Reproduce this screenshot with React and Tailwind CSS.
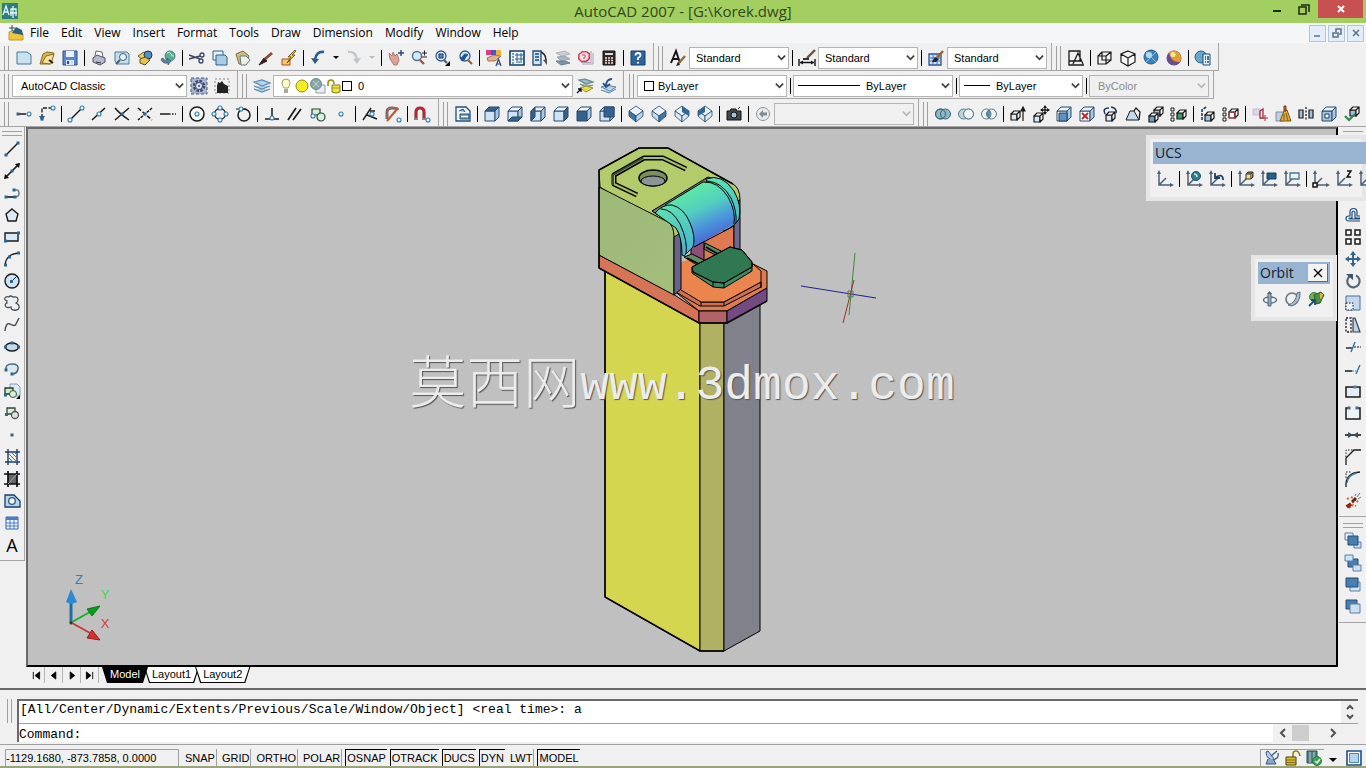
import { useState } from "react";
import clsx from "clsx";

const NAVY = "#1d3f63";
const INK = "#1a1a1a";

// solid-editing / view cube, face decides which side is filled dark
const Cube = ({ face, light = "#cfe3f5", dark = "#35618f" }) => (
    <g strokeWidth="1" stroke="#2b4a6b" strokeLinejoin="round">
        <path d="M1 5h10v10H1z" fill={face === "front" ? dark : light} />
        <path d="M1 5l4-4h10l-4 4z" fill={face === "top" ? dark : "#eaf3fb"} />
        <path d="M11 5l4-4v10l-4 4z" fill={face === "right" ? dark : "#a7c6e2"} />
        {face === "bottom" && <path d="M1 15l4-4h10l-4 4z" fill={dark} />}
        {face === "left" && <path d="M1 5l4-4v10l-4 4z" fill={dark} />}
        {face === "back" && <path d="M5 1h10v10H5z" fill={dark} />}
    </g>
);

const SmallBox = ({ x = 0, y = 0, fill = "#dbe8f4" }) => (
    <g transform={`translate(${x} ${y})`} stroke={INK} strokeWidth="1.2" strokeLinejoin="round">
        <path d="M0 3h6v6H0z" fill={fill} />
        <path d="M0 3l3-3h6L6 3zM6 3l3-3v6L6 9z" fill="#fff" />
    </g>
);

const Iso = ({ a, b, c }) => (
    <g stroke="#2a4868" strokeWidth=".8" strokeLinejoin="round">
        <path d="M8 0l7 5-7 5-7-5z" fill={a} />
        <path d="M1 5l7 5v6l-7-6z" fill={b} />
        <path d="M15 5l-7 5v6l7-6z" fill={c} />
    </g>
);

const Axes = ({ children }) => (
    <>
        <path d="M2 2v12h12M2 14l7-7" stroke="#4b6075" strokeWidth="1.5" />
        <path d="M2 -1L0 3h4zM17 14l-4-2v4z" fill="#4b6075" stroke="none" />
        {children}
    </>
);

const Dot = ({ x, y, fill = "#2f6690" }) => <rect x={x - 1.5} y={y - 1.5} width="3" height="3" fill={fill} stroke="none" />;
const Ring = ({ x, y }) => <circle cx={x} cy={y} r="2" fill="#eaf6ff" stroke="#3a7ca8" strokeWidth="1.1" />;

const icons = {
    new: <path d="M1 2h10l4 3v9H1z" fill="#c9e2ef" stroke="#47799c" />,
    open: <><path d="M1 14L4 4l4-2 7 1-4 11z" fill="#d9b84e" stroke="#8a6a20" /><path d="M3 13l4-7 8-2-3 10z" fill="#f6e3a0" stroke="#8a6a20" /><path d="M10 10l4 3" stroke="#222" strokeWidth="2" /></>,
    save: <><path d="M1 1h14v14H1z" fill="#5c86c4" stroke="#2c4f8c" /><path d="M4 1h8v6H4z" fill="#e8f1fb" stroke="none" /><path d="M4 10h8v5H4z" fill="#d5e2f2" stroke="none" /><path d="M6 11v3" stroke="#2c4f8c" strokeWidth="2" /></>,
    print: <><path d="M4 6l1-5 6 1 1 5" fill="#fff" stroke="#667" /><path d="M2 8l4-3 8 3v4l-5 3-7-3z" fill="#b5b9cf" stroke="#4c4f68" /><path d="M5 12l5 1" stroke="#333" /></>,
    preview: <><path d="M1 2h12l2 2v10H3l-2-3z" fill="#c4dfec" stroke="#4c7c99" /><circle cx="9" cy="7" r="3.5" fill="#e9f7ff" stroke="#38617e" /><path d="M6 10l-4 4" stroke="#4b5a66" strokeWidth="2" /></>,
    publish: <><path d="M1 6l6-4 5 3-6 5z" fill="#edd36a" stroke="#6d5b1c" /><circle cx="11" cy="5" r="4" fill="#4e93c4" stroke="#235" /><path d="M3 9l5-2 5 3-5 5-5-2z" fill="#e4c450" stroke="#5c4a12" /></>,
    globe: <><circle cx="10" cy="6" r="5" fill="#5bb08b" stroke="#3e80a0" /><path d="M7 3q3-2 4 1t3 2" stroke="#d2efe2" /><path d="M1 9q1 5 7 4v2l3-4-4-3v2q-3 1-4-2z" fill="#5b7fa3" stroke="#34536f" strokeWidth=".6" /></>,
    cut: <><path d="M0 5l11 4M0 9l11-3" stroke="#3b4760" strokeWidth="1.4" /><circle cx="13" cy="5" r="2" stroke="#35466d" strokeWidth="1.3" /><circle cx="12" cy="11" r="2" stroke="#35466d" strokeWidth="1.3" /></>,
    copy: <><path d="M1 1h10v9H1z" fill="#e9f3f9" stroke="#2d6289" /><path d="M4 5h9l2 2v8H4z" fill="#a9cde4" stroke="#2d6289" /></>,
    paste: <><path d="M1 4l7-3 6 5-3 8H4z" fill="#c9bd82" stroke="#7a6d38" /><path d="M5 6h6l4 4-4 5H6z" fill="#eef0ee" stroke="#677" /></>,
    match: <><path d="M1 15l5-7 3 3z" fill="#2d2220" stroke="#2d2220" /><path d="M7 9l7-6" stroke="#8a4a2c" strokeWidth="2.8" /></>,
    blockEdit: <><path d="M1 9h8v6H1z" fill="#f6c873" stroke="#a6541c" /><path d="M14 0L7 7h3l-4 6 8-8h-3l4-4z" fill="#f3ce28" stroke="#57430c" strokeWidth=".8" /></>,
    undo: <><path d="M14 2Q6 1 5 10" stroke="#2a5c8a" strokeWidth="2.6" /><path d="M1 8l4 6 4-5z" fill="#2a5c8a" stroke="none" /></>,
    redo: <><path d="M2 2q8-1 9 8" stroke="#c2c6c9" strokeWidth="2.4" /><path d="M7 9l4 5 4-6z" fill="#c2c6c9" stroke="none" /></>,
    pan: <><path d="M1 3l3 3 1-4 2 4 2-2 2 6-2 5H6L2 9z" fill="#dba498" stroke="#a2685d" strokeWidth=".8" /><path d="M13 0v6M10 3h6" stroke="#27486c" strokeWidth="1.4" /></>,
    zoomRt: <><circle cx="6" cy="6" r="4.5" fill="#d3eafa" stroke="#4f7390" strokeWidth="1.4" /><path d="M9 10l4 4" stroke="#a4583a" strokeWidth="2.4" /><path d="M11 3h5M13.500 .5v5M11 7h5" stroke="#222" /></>,
    zoomWin: <><circle cx="7" cy="6" r="5" fill="#cfe8fa" stroke="#355f88" strokeWidth="1.3" /><path d="M5 4h4v4H5z" fill="#5a8bb8" stroke="#235" /><path d="M10 10l3 3" stroke="#456" strokeWidth="2" /><path d="M16 11v5h-5z" fill="#000" stroke="none" /></>,
    zoomPrev: <><circle cx="8" cy="6" r="5" fill="#cfe8fa" stroke="#355f88" strokeWidth="1.3" /><path d="M11 5Q7 2 5 8l-2-1 2 4 3-2" fill="#27538a" stroke="#27538a" /><path d="M11 10l4 4" stroke="#a4583a" strokeWidth="2.2" /></>,
    props: <><path d="M0 0h5v5H0z" fill="#d83a8b" stroke="none" /><path d="M5 0h5v5H5z" fill="#4a52c8" stroke="none" /><path d="M10 0h5v5h-5z" fill="#e9b23c" stroke="none" /><path d="M1 8l7-3 7 1-6 5H2z" fill="#e0b28c" stroke="#94603d" strokeWidth=".8" /><path d="M10 16l2.500-7 2.500 7M11 14h3" stroke="#2a4a7c" strokeWidth="1.200" /></>,
    dcenter: <><path d="M1 1h14v14H1z" fill="#eaf4fb" stroke="#123d66" strokeWidth="1.6" /><path d="M4 3v11" stroke="#123d66" strokeDasharray="2 1" /><path d="M7 4h2v2H7zM11 4h2v2h-2zM7 8h2v2H7zM11 8h2v2h-2zM7 12h6" stroke="#2e618f" /></>,
    palettes: <><path d="M1 1h8v14H1z" fill="#cfe3f0" stroke="#1d4c79" strokeWidth="1.3" /><path d="M3 4h4M3 7h4M3 10h4" stroke="#1d4c79" strokeWidth="1.5" /><path d="M9 2q5 2 5 9" stroke="#222" strokeWidth="1.4" /><path d="M11 10l4 5v-6z" fill="#555" /></>,
    sheets: <><path d="M1 3l9-2 5 3-8 2z" fill="#c6d0d8" stroke="#a9b4bc" /><path d="M2 7l8-1 5 3-9 2z" fill="#aab7c1" stroke="#9aa7b1" /><path d="M1 11l9 0 5 2-9 2z" fill="#7d93a4" stroke="#6a7f90" /></>,
    markup: <><path d="M4 14h11V3M3 12.500h10V1" fill="none" stroke="#a6a0b6" /><path d="M1 1h11v11H1z" fill="#fbe3e5" stroke="none" /><path d="M3 3q1-2 3-1 3-1 4 1 2 0 1 3 1 3-1 4-2 2-4 1-3 1-4-1-2-1-1-3-1-3 2-4z" stroke="#c9223f" strokeWidth="1.3" /><path d="M4 5h3v3H5" stroke="#d04a60" /></>,
    calc: <><path d="M2 1h12v14H2z" fill="#35282a" stroke="#1c1213" /><path d="M4 3h8v2H4z" fill="#cfe3d4" stroke="none" /><path d="M4 8h8M4 10.500h8M4 13h8" stroke="#f3e5d5" strokeWidth="1.6" strokeDasharray="2 1" /></>,
    textStyle: <><path d="M1 13L6 1l4 12M3 9h6" stroke="#111" strokeWidth="1.9" /><path d="M8 14l7-8" stroke="#8e6a45" strokeWidth="2.4" /><path d="M6 16l4-1-2-3z" fill="#222" /></>,
    dimStyle: <><path d="M0 9v7M16 9v7M1 12.500h14" stroke="#111" strokeWidth="1.400" /><path d="M1 12.500l3-2v4zM15 12.500l-3-2v4z" fill="#111" /><path d="M8 8l8-8" stroke="#6b4f3c" strokeWidth="2.400" /><path d="M4 9h6" stroke="#333" strokeWidth="2" /></>,
    tableStyle: <><path d="M1 4h12v11H1z" fill="#cddff3" stroke="#2c5590" strokeWidth="1.3" /><path d="M1 8h12M1 11h12M5 4v11M9 4v11" stroke="#4c77b5" /><path d="M4 12l3-5 4 2-3 3z" fill="#1c2733" stroke="none" /><path d="M9 8l6-7" stroke="#9a6132" strokeWidth="2.4" /></>,
    gear: <><path d="M0 0h16v16H0z" fill="#a9b4cb" stroke="#485a7e" strokeDasharray="3 2" /><circle cx="8" cy="8" r="5" stroke="#36486d" strokeWidth="2.4" strokeDasharray="2.500 1.400" /><circle cx="8" cy="8" r="3.500" fill="#dfe4f0" stroke="#36486d" /><circle cx="8" cy="8" r="1" fill="#36486d" stroke="none" /></>,
    workspace: <><path d="M1 1h14v14H1z" stroke="#888" strokeDasharray="2 2" /><path d="M3 15V8l1-4 2 1 2-2 2 3 4 2v7z" fill="#222" stroke="none" /></>,
    layers: <><path d="M0 4l8-2 8 3-8 3zM0 8l8 3 8-3M0 11l8 3 8-3" fill="#b6d2e6" stroke="#5b8cb0" strokeWidth="1.2" /></>,
    layerMake: <><path d="M2 2l6-1 8 3-7 2zM3 6l6 3 7-2" fill="#9fb9c0" stroke="#5e858e" strokeWidth="1.2" /><path d="M3 10l6-2 7 2-7 4z" fill="#e8d94a" stroke="#9c8f2a" /><path d="M0 15l4-4M4 14v-3H1" stroke="#111" strokeWidth="1.3" /></>,
    layerPrev: <><path d="M1 9l6-2 9 2-6 4zM1 12l8 3 7-4" fill="#b8cfe2" stroke="#5f88aa" /><path d="M12 1Q6 1 6 8M3 5l3 4 4-3" stroke="#27538a" strokeWidth="1.8" /></>,
    bulb: <><path d="M8 1q4 0 4 4 0 2-2 5H6Q4 7 4 5q0-4 4-4z" fill="#fdfbcf" stroke="#a4a05a" /><path d="M6 12h4M6 14h4" stroke="#8b8b8b" strokeWidth="1.500" /></>,
    sun: <circle cx="8" cy="8" r="6" fill="#f2ee23" stroke="#8c8a1a" />,
    vp: <><path d="M6 7h9v8H6z" fill="#e8eef4" stroke="#8aa0b4" /><circle cx="6" cy="6" r="5.500" fill="#8ca6a8" stroke="#6b8694" /><path d="M3 3l6 6M9 3L3 9" stroke="#bfd0d0" /></>,
    lock: <><path d="M2 8V5q0-3 3-3t3 4" stroke="#9a9312" strokeWidth="1.6" /><path d="M6 7h8v7q-4 2-8 0z" fill="#eee645" stroke="#827b10" /><path d="M6 10h8" stroke="#a69e20" /></>,
    help: <><path d="M1 1h14v14H1z" fill="#2d649c" stroke="#173c66" /><path d="M5.500 5.500q0-2.500 2.500-2.500t2.500 2.200Q10.500 7 8 8v2" stroke="#fff" strokeWidth="1.800" /><path d="M7 12h2v1.500H7z" fill="#fff" stroke="none" /></>,
    trackPt: <><path d="M1 8h9" stroke={INK} strokeWidth="1.500" /><Dot x={2} y={8} /><Ring x={13} y={8} /></>,
    from: <><path d="M3 12V2h9" stroke={INK} strokeWidth="1.300" strokeDasharray="4 1.500" /><Dot x={3} y={13} /><path d="M0 10l3 5 3-5z" fill="#2f5f88" stroke="none" /><Ring x={14} y={2} /></>,
    endpt: <><path d="M3 13L13 3" stroke={INK} strokeWidth="1.500" /><Ring x={14} y={2} /><Ring x={2} y={14} /></>,
    midpt: <><path d="M1 14L14 2" stroke={INK} strokeWidth="1.500" /><Ring x={8} y={8} /></>,
    inter: <><path d="M1 2q5 6 14 12M15 2L1 14" stroke={INK} strokeWidth="1.500" /><Dot x={8} y={8} /></>,
    appInt: <><path d="M15 2L1 14" stroke={INK} strokeWidth="1.500" strokeDasharray="3 1" /><path d="M1 2l14 12" stroke={INK} strokeWidth="1.500" strokeDasharray="4 2" /><Dot x={8} y={8} /></>,
    ext: <><path d="M0 8h9" stroke={INK} strokeWidth="1.500" /><path d="M9 8h7" stroke={INK} strokeDasharray="1.500 1.500" strokeWidth="1.500" /></>,
    center: <><circle cx="8" cy="8" r="7" stroke={INK} strokeWidth="1.500" fill="#f7fbfe" /><Ring x={8} y={8} /></>,
    quad: <><circle cx="8" cy="8" r="5.500" stroke={INK} strokeWidth="1.300" /><Ring x={8} y={2} /><Ring x={14} y={8} /><Ring x={8} y={14} /><Ring x={2} y={8} /></>,
    tan: <><circle cx="9" cy="9" r="6" stroke={INK} strokeWidth="1.500" /><path d="M1 3h10" stroke={INK} /><Ring x={6} y={3} /></>,
    perp: <><path d="M1 13h14M8 2v11" stroke={INK} strokeWidth="1.500" /><Ring x={8} y={12} /></>,
    par: <path d="M1 14L9 2M6 14l8-11" stroke={INK} strokeWidth="1.700" />,
    insertPt: <><path d="M2 3h8v6H2z" fill="#d8ecd5" stroke="#25452d" strokeWidth="1.200" /><circle cx="11" cy="11" r="4" fill="#dcefe0" stroke="#25452d" strokeWidth="1.200" /><Ring x={3} y={10} /></>,
    node: <Ring x={8} y={8} />,
    nearest: <><path d="M1 14L9 2M5 9l10 4M8 5h5" stroke={INK} strokeWidth="1.400" /><Ring x={10} y={8} /></>,
    noneSnap: <><path d="M2 13V6q0-4 5-4t6 2" stroke="#8b6761" strokeWidth="3" /><path d="M2 15L13 2" stroke="#b9593c" strokeWidth="2" /><Ring x={14} y={14} /></>,
    magnet: <><path d="M2 14V6q0-4 4-4t4 4v8" stroke="#a82e3c" strokeWidth="3.200" /><path d="M.5 13h3M8.500 13h3" stroke="#888" strokeWidth="2" /><Ring x={14} y={14} /></>,
    namedViews: <><path d="M1 1h10l4 4v10H1z" fill="#eef5fb" stroke="#234f77" strokeWidth="1.300" /><path d="M4 5l4-2 2 3M5 13V8h9v5H5z" fill="#7fa7c9" stroke="#234f77" /><path d="M6 10.500h7" stroke="#fff" /></>,
    top: <Cube face="top" />, bottom: <Cube face="bottom" />, left: <Cube face="left" />,
    right: <Cube face="right" />, front: <Cube face="front" />, back: <Cube face="back" />,
    sw: <Iso a="#e8f2fa" b="#3f75a5" c="#b9d4ea" />, se: <Iso a="#e8f2fa" b="#c4dbee" c="#3f75a5" />,
    ne: <><Iso a="#e8f2fa" b="#dbe9f4" c="#dbe9f4" /><path d="M8 0l7 5v5L8 6z" fill="#346592" stroke="none" /></>,
    nw: <><Iso a="#e8f2fa" b="#dbe9f4" c="#dbe9f4" /><path d="M8 0L1 5v5l7-4z" fill="#346592" stroke="none" /></>,
    camera: <><path d="M1 5h3l1-2h5l1 2h4v9H1z" fill="#43484f" stroke="#111" /><circle cx="8" cy="9" r="3" fill="#a7c4d8" stroke="#111" /><path d="M12 3l2-2" stroke="#222" /></>,
    prevView: <><circle cx="8" cy="8" r="6.500" fill="#e9ecee" stroke="#8a949c" /><path d="M4 8l4-4v2.500h4v3H8V12z" fill="#7e8b96" stroke="none" /></>,
    union: <g stroke="#376274"><circle cx="5.500" cy="8" r="5" fill="#8fb7c6" /><circle cx="10.500" cy="8" r="5" fill="#8fb7c6" /><circle cx="5.500" cy="8" r="5" /></g>,
    subtract: <g stroke="#547989"><circle cx="10.500" cy="8" r="5" fill="#f2f7f9" /><circle cx="5.500" cy="8" r="5" fill="#bcd3dc" /><circle cx="10.500" cy="8" r="5" fill="#eef5f8" /></g>,
    intersect: <g stroke="#547989"><circle cx="5.500" cy="8" r="5" fill="#eef5f8" /><circle cx="10.500" cy="8" r="5" fill="#eef5f8" /><path d="M8 4q4 4 0 8-4-4 0-8z" fill="#5b93ab" /></g>,
    extrude: <><SmallBox x={1} y={5} /><path d="M13 15V3M11 5l2-4 2 4z" stroke={INK} fill={INK} strokeWidth="1.200" /></>,
    moveFace: <><SmallBox x={1} y={7} /><path d="M12 0v8M8 4h8" stroke={INK} strokeWidth="1.300" /><path d="M12-1l-2 3h4zM12 9l-2-3h4zM7 4l3-2v4zM17 4l-3-2v4z" fill={INK} stroke="none" /></>,
    offsetFace: <><Cube light="#fff" /><path d="M3 7h8v8H3z" fill="#5f93c4" stroke={NAVY} /></>,
    deleteFace: <><Cube light="#fff" /><path d="M3 7l6 6M9 7l-6 6" stroke="#b8222e" strokeWidth="1.800" /></>,
    rotateFace: <><SmallBox x={4} y={6} /><path d="M3 8Q0 2 7 2M9 1q6 1 5 6" stroke={NAVY} strokeWidth="1.600" /></>,
    taper: <><path d="M1 14L5 5h4l5 9z" fill="#c7d9ea" stroke={INK} /><path d="M9 5l2-3 4 4-1 8" stroke={INK} strokeWidth="1.300" /></>,
    copyFace: <><SmallBox x={6} y={1} fill="#9fc1de" /><SmallBox x={1} y={7} fill="#6f9cc6" /></>,
    colorFace: <><SmallBox x={6} y={4} fill="#3f9a62" /><path d="M0 2h3v3H0zM0 7h3v3H0zM0 12h3v3H0z" fill="#fff" stroke={INK} /></>,
    copyEdge: <><SmallBox x={5} y={6} fill="#a7c3df" /><path d="M2 14V4l4-3" stroke={NAVY} strokeWidth="1.600" strokeDasharray="3 1" /></>,
    colorEdge: <><SmallBox x={6} y={3} fill="#fff" /><path d="M6 6h6v6H6z" stroke="#c03a52" /><path d="M0 2h3v3H0zM0 7h3v3H0zM0 12h3v3H0z" fill="#fff" stroke={INK} /></>,
    imprint: <><path d="M1 3h7v6H1z" fill="#ddd6e8" stroke="#c7bcd6" /><path d="M8 5l3-2v9H8z" stroke="#a5283e" strokeWidth="1.300" /><path d="M13 9v6M10 12h6" stroke="#b02b40" /></>,
    clean: <><path d="M1 6h8v9H1z" fill="#bcd0df" stroke="#7d92a4" /><path d="M9 5l3-1 4 11H5z" fill="#dfab3e" stroke="#7a5314" /><path d="M9 0h2v5H9z" fill="#bf643c" stroke="#7a3a1c" /><path d="M9 8l0 6M11 7l2 8" stroke="#805e18" /></>,
    separate: <><path d="M1 4h4v8H1zM11 4h4v8h-4z" fill="#a4c0d8" stroke={INK} strokeWidth="1.200" /><path d="M8 1v14" stroke={INK} strokeDasharray="2 1.500" strokeWidth="1.300" /></>,
    shell: <><Cube light="#a7c3dc" /><path d="M4 8h4v4H4z" fill="#edf5fb" stroke={NAVY} /></>,
    check: <><SmallBox x={6} y={1} fill="#9fc1de" /><path d="M1 10l4 4 6-6" stroke="#2c8a4d" strokeWidth="2.200" /></>,
    wire2d: <path d="M1 1h11v10H1zM5 14l5-11 5 11M7 11h6M1 11v4h15" stroke={INK} strokeWidth="1.300" />,
    wire3d: <path d="M1 6h8v8H1zM5 2h9v8H5zM1 6l4-4M9 6l5-4M9 14l5-4" stroke={INK} strokeWidth="1.200" />,
    hidden3d: <path d="M8 1l7 3v8l-7 4-7-4V4zM1 4l7 4 7-4M8 8v8" fill="#fff" stroke={INK} strokeWidth="1.200" />,
    realistic: <><circle cx="8" cy="7" r="7" fill="#3d82ba" stroke="#275c88" /><circle cx="6" cy="5" r="3" fill="#b7dcf2" stroke="none" /><path d="M3 2l10 10M13 2L3 12" stroke="#a7cce6" strokeWidth=".8" /></>,
    conceptual: <><circle cx="8" cy="8" r="7.500" fill="#6a4c92" stroke="none" /><path d="M3 2q6-4 11 2 2 4 0 8Q4 12 3 2z" fill="#e3a032" stroke="none" /><circle cx="7" cy="4.500" r="2.500" fill="#fbe7a5" stroke="none" /></>,
    vsManager: <><circle cx="6" cy="7" r="6" fill="#67a7c9" stroke="#2c6187" /><path d="M8 4h7v11H8z" fill="#e4f1fa" stroke="#1d4c79" /><path d="M10 7h1M12 7h2M10 9h1M12 9h2M10 12h1M12 12h2" stroke="#1d4c79" strokeWidth="1.300" /></>,
    line: <><path d="M2 14L14 2" stroke={INK} strokeWidth="1.400" /><Dot x={2} y={14} /><Dot x={14} y={2} /></>,
    xline: <><path d="M1 15L15 1" stroke={INK} strokeWidth="1.700" /><path d="M0 16l1-5 4 4zM16 0l-1 5-4-4z" fill="#111" stroke="none" /><Dot x={8} y={8} /></>,
    pline: <><path d="M1 12h10q4 0 4-4t-5-3" stroke="#6c8190" strokeWidth="1.600" /><path d="M1 12h9" stroke={INK} strokeWidth="1.400" /><Dot x={2} y={12} /><Dot x={11} y={12} /><Dot x={10} y={5} /></>,
    polygon: <path d="M8 2l6 5-2 7H4L2 7z" fill="#dfe8ee" stroke={INK} strokeWidth="1.400" />,
    rect: <><path d="M1 4h13v8H1z" fill="#d9e8f7" stroke={INK} strokeWidth="1.400" /><Dot x={1.5} y={12} /><Dot x={14.5} y={4} /></>,
    arc: <><path d="M1 14Q2 3 15 2" stroke={INK} strokeWidth="1.300" /><Dot x={1.500} y={14} /><Dot x={5.500} y={6} /><Dot x={14.500} y={2} /></>,
    circle: <><circle cx="8" cy="8" r="7" fill="#cfe3f5" stroke={INK} strokeWidth="1.400" /><path d="M8 8l5-5" stroke="#235" /><Dot x={7.500} y={8.500} /></>,
    revcloud: <path d="M3 6Q0 5 1 3q1-2 4-1 1-2 4 0 5-1 5 3 0 2-2 3 4 2 3 5-1 3-5 2-3 0-3-3-3 1-5 0-2-3 1-4-1-1 0-2z" fill="#edf0f2" stroke="#4a4f54" strokeWidth="1.300" />,
    spline: <path d="M1 14Q2 5 6 7q5 3 6 0l3-6" stroke="#444b52" strokeWidth="1.400" />,
    ellipse: <><ellipse cx="8" cy="8" rx="6.500" ry="4" fill="#c6dbea" stroke={INK} strokeWidth="1.400" /><Dot x={1.500} y={8} /><Dot x={14.500} y={8} /><Dot x={8} y={4} /></>,
    ellArc: <><path d="M2 9q-1-6 6-6t6 5-6 5" stroke="#486a83" strokeWidth="1.600" fill="#dce8f0" /><Dot x={2} y={9} /><Dot x={8} y={13} /></>,
    insertBlk: <><path d="M6 1h7l3 3v9H6z" fill="#dce9f2" stroke="#86a0b4" /><path d="M1 5h8v6H1z" fill="#d4ead0" stroke="#1d3d22" strokeWidth="1.300" /><circle cx="9" cy="11" r="3.500" fill="#dcefd6" stroke="#2d5a30" /><Dot x={1.500} y={12} /><path d="M16 12v4h-4z" fill="#000" stroke="none" /></>,
    makeBlk: <><path d="M3 3h8v6H3z" fill="#dceadc" stroke="#2e4a30" strokeWidth="1.300" /><circle cx="11" cy="10" r="3.500" fill="#dde3dd" stroke="#555" strokeWidth="1.300" /><Dot x={2.500} y={9.500} /></>,
    point: <Dot x={8} y={8} />,
    hatch: <><path d="M1 3h15M1 13h15M4 0v16M13 0v16" stroke="#1a3e5e" strokeWidth="1.400" /><path d="M4 4l9 9M4 8l5 5M8 4l5 5M4 11l2 2M11 4l2 2" stroke="#3d7aa6" /></>,
    gradient: <><path d="M4 3h9v10H4z" fill="#63686b" stroke="none" /><path d="M0 3h16M0 13h16M4 0v16M13 0v16" stroke="#0d0d12" strokeWidth="1.700" /><path d="M4 13l9-10" stroke="#a6a6a6" /></>,
    region: <><path d="M1 2h9l6 6v6H1z" fill="#bcd4ee" stroke="#173f66" strokeWidth="1.300" /><circle cx="8" cy="8" r="3.300" fill="#f2f7fb" stroke="#2a5b87" strokeWidth="1.300" /></>,
    table: <><path d="M2 2h12v12H2z" fill="#f2f7ff" stroke="#3562a5" /><path d="M2 3.500h12" stroke="#4d7cc0" strokeWidth="3" /><path d="M2 8h12M2 11h12M6 5v9M10 5v9" stroke="#4d7cc0" /></>,
    erase: <path d="M2 12L9 3l5 3-6 8z" fill="#f0cfc3" stroke="#6f4a41" />,
    offset: <path d="M15 14H4q-3 0-3-2.500T4 9h1V5q0-3.500 3.500-3.500T12 5v4h3M15 12H5q-1 0-1-.5t1-.5h2V6q0-2 1.500-2T10 6v5h5" stroke="#1f4c77" strokeWidth="1.200" fill="none" />,
    array: <path d="M1 1h5v5H1zM10 1h5v5h-5zM1 10h5v5H1zM10 10h5v5h-5z" fill="#fff" stroke={INK} strokeWidth="1.500" />,
    move: <><path d="M8 1v14M1 8h14" stroke="#36648b" strokeWidth="2" /><path d="M8 0L5 4h6zM8 16l-3-4h6zM0 8l4-3v6zM16 8l-4-3v6z" fill="#36648b" stroke="none" /></>,
    rotate: <><path d="M5 3a6.200 6.200 0 1 0 6-.5" stroke="#51687a" strokeWidth="2.200" /><path d="M1 1h7v6z" fill="#36536b" stroke="none" /></>,
    scale: <><path d="M1 1h14v14H1z" fill="#c3d8ee" stroke="#4a6f92" /><path d="M1 8h7v7H1z" fill="#eaf3fb" stroke={INK} strokeDasharray="1.500 1.500" /></>,
    stretch: <><path d="M1 1h5v14H1z" stroke={INK} strokeDasharray="2 1.500" strokeWidth="1.300" /><path d="M8 1h2l5 14H8z" fill="#c3d2de" stroke="#2c4258" strokeWidth="1.200" /></>,
    trim: <><path d="M1 9h6" stroke={INK} strokeWidth="1.400" /><path d="M9 8h7" stroke={INK} strokeDasharray="2 1" /><path d="M6 13l4-10" stroke="#2b73a8" strokeWidth="1.400" /></>,
    extend: <><path d="M0 10h7" stroke={INK} strokeWidth="1.500" /><path d="M7 10h4" stroke="#2b73a8" strokeDasharray="2 1" /><path d="M11 13l4-9" stroke="#2b73a8" strokeWidth="1.400" /></>,
    breakPt: <><path d="M1 4h14v10H1z" fill="#e4edf5" stroke={INK} strokeWidth="1.500" /><Dot x={10} y={4} fill="#5d8097" /></>,
    breakTwo: <><path d="M3 3H1v11h14V3h-2" fill="#edf2f7" stroke={INK} strokeWidth="1.500" /><Dot x={4} y={3} fill="#51688a" /><Dot x={12} y={3} fill="#51688a" /></>,
    join: <><path d="M0 8h16" stroke={INK} strokeWidth="1.600" /><path d="M8 8L3 5v6zM8 8l5-3v6z" fill="#33505f" stroke="none" /></>,
    chamfer: <><path d="M1 16V9l8-8h7" stroke={INK} strokeWidth="1.300" /><path d="M1 8V1h7" stroke={INK} strokeDasharray="1.500 1.500" /></>,
    fillet: <><path d="M1 16Q0 2 15 1" stroke={INK} strokeWidth="1.300" /><path d="M2 12Q3 4 12 2" stroke="#4483b8" strokeWidth="1.500" /><path d="M1 7V1h6" stroke={INK} strokeDasharray="1.500 1.500" /></>,
    explode: <><path d="M2 6l2-1M1 13l5-2 5-4M4 15l4-3 3 1M6 4l4 2 3 3" stroke="#d06a35" strokeWidth="2" strokeDasharray="2 1.500" /><path d="M2 14l4-3" stroke="#8a2418" strokeWidth="3.500" /><path d="M7 9l4-4" stroke="#5a2a20" strokeWidth="3" /><path d="M12 4l3-4M13 6l3-2M10 3l1-2" stroke="#5b7c9c" /></>,
    drawFront: <><path d="M0 0h8v7H0z" fill="#e4eef8" stroke="#5b7fa5" /><path d="M9 9h7v6H9z" fill="#c4dbf0" stroke="#5b7fa5" /><path d="M3 3h10v9H3z" fill="#477fb3" stroke="#274c70" /></>,
    drawBack: <><path d="M3 4h10v8H3z" fill="#477fb3" stroke="#274c70" /><path d="M0 0h8v6H0z" fill="#cfe2f4" stroke="#5b7fa5" /><path d="M8 10h8v6H8z" fill="#cfe2f4" stroke="#5b7fa5" /></>,
    drawAbove: <><path d="M5 5h10v9H5z" fill="#d3e6f5" stroke="#5b7fa5" /><path d="M1 1h12v9H1z" fill="#477fb3" stroke="#274c70" /></>,
    drawUnder: <><path d="M1 1h11v9H1z" fill="#477fb3" stroke="#274c70" /><path d="M5 5h10v9H5z" fill="#cfe0ef" stroke="#5b7fa5" /></>,
    ucs: <Axes />,
    ucsWorld: <Axes><circle cx="10" cy="5" r="4.500" fill="#2f7c92" stroke="#1d4f66" /><path d="M8 3q3 0 3 3" stroke="#bfe6dd" strokeWidth="1.500" /></Axes>,
    ucsPrev: <Axes><path d="M14 9Q14 2 7 6M6 2v5h5" stroke={NAVY} strokeWidth="1.800" /></Axes>,
    ucsFace: <Axes><path d="M8 3h5v5H8z" fill="#f0dd7a" stroke="#333" /><path d="M8 3l2-2h5l-2 2M13 8l2-2V1" fill="#6f6742" stroke="#333" /></Axes>,
    ucsObject: <Axes><path d="M6 2h9v6H6z" fill="#275e8a" stroke="#173f60" /></Axes>,
    ucsView: <Axes><path d="M6 2h9v6H6z" fill="#e8f3f8" stroke="#4f7484" strokeWidth="1.300" /></Axes>,
    ucsOrigin: <Axes><path d="M0 12h4v4H0z" fill="#fff" stroke="#111" strokeWidth="1.500" /></Axes>,
    ucsZ: <Axes><path d="M11 0h4l-4 6h4" stroke="#111" strokeWidth="1.400" /></Axes>,
    orbit: <><ellipse cx="8" cy="9" rx="6.500" ry="3" stroke="#53677c" strokeWidth="1.400" /><path d="M6 2h3v13H6z" fill="#8fa9c0" stroke="#53677c" /><path d="M5 3l2.500-3L10 3z" fill="#53677c" /></>,
    freeOrbit: <><circle cx="7" cy="8" r="6" stroke="#6a7b8b" strokeWidth="1.700" /><path d="M3 14q8-2 9-12l3-1q1 10-8 14z" fill="#a9bac9" stroke="#5b7186" /></>,
    contOrbit: <><circle cx="6" cy="6" r="4.500" fill="#6fb15b" stroke="#437a3c" /><path d="M6 4l7-3 3 3-4 8-4 1z" fill="#4e8f42" stroke="#285c2b" /><path d="M1 15l6-6M3 9h4v5" stroke="#1c4f7c" strokeWidth="1.800" /><path d="M12 2l3 1-1 4-2 1z" fill="#ddb63c" stroke="none" /></>,
    comm: <><path d="M2 2q0 8 9 8L4 1z" fill="#b5cbe6" stroke="#385886" /><path d="M4 9l-2 5h10l-3-5" fill="#8ba6cc" stroke="#385886" /><path d="M7 6l6-5M11 9q4-1 3-6" stroke="#385886" strokeWidth="1.300" /></>,
    padlock: <><path d="M8 7V4q0-3 3-3t4 5" stroke="#8f8316" strokeWidth="1.600" /><path d="M1 7h10v8H1z" fill="#d8bd2b" stroke="#4c420c" /><path d="M1 10h10M1 12.500h10" stroke="#7b6c14" /></>,
    standards: <><path d="M1 1h10v12H1z" fill="#527f87" stroke="#2c4d55" /><path d="M4 2v11M8 2v11" stroke="#bcd2d6" /><circle cx="11" cy="11" r="4.500" fill="#3aa254" stroke="#287a3c" /><path d="M9 11l2 2 3-4" stroke="#fff" strokeWidth="1.400" /></>,
    cleanScreen: <><path d="M1 1h14v14H1z" fill="#fff" stroke="#1f4f80" strokeWidth="1.600" /><path d="M3.500 3.500h9v9h-9z" fill="#b4d3ef" stroke="#4d83b5" /></>,
};

const Icon = ({ name }) => (
    <svg viewBox="0 0 16 16" width="16" height="16" fill="none" className="shrink-0 overflow-visible">{icons[name]}</svg>
);

const Sep = () => (
    <span className="flex w-[6px] shrink-0 justify-center"><span className="h-4 w-px bg-black" /></span>
);

const Drop = ({ faded }) => (
    <button aria-label="history" className="flex w-[13px] shrink-0 items-center justify-center">
        <span className={clsx("border-x-[3px] border-t-[3px] border-x-transparent", faded ? "border-t-[#bdbdbd]" : "border-t-black")} />
    </button>
);

const Tools = ({ items }) => items.map((name, i) => {
    if (name === "|") return <Sep key={i} />;
    if (name === "v") return <Drop key={i} />;
    if (name === "v-") return <Drop key={i} faded />;
    return (
        <button key={i} aria-label={name} className="flex h-[22px] w-[23px] shrink-0 items-center justify-center hover:bg-[#d5e6f5]">
            <Icon name={name} />
        </button>
    );
});

const Grip = () => (
    <span className="mr-[3px] ml-1 flex h-6 shrink-0 gap-[3px]">
        <span className="w-px bg-[#a0a0a0]" />
        <span className="w-px bg-[#a0a0a0]" />
    </span>
);

const Bar = ({ children, className }) => (
    <div className={clsx("flex shrink-0 items-center border-r border-b border-[#a5a5a5] pt-[2px] pr-1", className)}>
        <Grip />
        {children}
    </div>
);

const Chevron = ({ className, d = "M1 3l4 4 4-4" }) => (
    <svg viewBox="0 0 10 10" width="10" height="10" fill="none" stroke="currentColor" strokeWidth="2" className={className}><path d={d} /></svg>
);

const Combo = ({ label, value, width, before, disabled, line, inset = "pl-[6px]" }) => (
    <div className={clsx("relative flex h-[22px] shrink-0 items-center border border-[#b4b4b4]", disabled ? "bg-[#f0f0f0]" : "bg-white", width)}>
        {before}
        {line && <span className="ml-1 flex-1 border-t border-black" />}
        <select
            aria-label={label}
            disabled={disabled}
            className={clsx("appearance-none bg-transparent pr-4 text-[11px] leading-[20px] outline-none", inset, line ? "w-[92px]" : "w-full", disabled ? "text-[#8a8a8a]" : "text-black")}
        >
            <option>{value}</option>
        </select>
        <Chevron className={clsx("pointer-events-none absolute right-[2px] size-[9px]", disabled ? "text-[#b8b8b8]" : "text-[#404040]")} />
    </div>
);

const Swatch = () => <span className="ml-[6px] size-[10px] shrink-0 border border-black bg-white" />;

const menus = ["File", "Edit", "View", "Insert", "Format", "Tools", "Draw", "Dimension", "Modify", "Window", "Help"];

const drawTools = ["line", "xline", "pline", "polygon", "rect", "arc", "circle", "revcloud", "spline", "ellipse", "ellArc", "insertBlk", "makeBlk", "point", "hatch", "gradient", "region", "table"];
const modifyTools = ["erase", "copy", "separate", "offset", "array", "move", "rotate", "scale", "stretch", "trim", "extend", "breakPt", "breakTwo", "join", "chamfer", "fillet", "explode"];
const orderTools = ["drawFront", "drawBack", "drawAbove", "drawUnder"];

const HGrip = () => (
    <span className="mt-1 mb-[2px] flex w-5 flex-col gap-[3px]">
        <span className="h-px bg-[#a0a0a0]" />
        <span className="h-px bg-[#a0a0a0]" />
    </span>
);

const Drawing = () => (
    <svg viewBox="28 129 1308 536" className="h-full w-full" fill="none" stroke="#000" strokeLinejoin="round">
        <defs>
            <linearGradient id="drum" gradientUnits="userSpaceOnUse" x1="692" y1="186" x2="716" y2="240">
                <stop offset="0" stopColor="#5feaa0" />
                <stop offset=".4" stopColor="#52cfc0" />
                <stop offset=".7" stopColor="#4c94dc" />
                <stop offset="1" stopColor="#4763cf" />
            </linearGradient>
            <linearGradient id="disc" x1="0" y1="0" x2="0.3" y2="1">
                <stop offset="0" stopColor="#5fe4b0" />
                <stop offset="1" stopColor="#48b9cf" />
            </linearGradient>
            <linearGradient id="shell" x1="0" y1="0" x2="1" y2="1">
                <stop offset="0" stopColor="#9db877" />
                <stop offset="1" stopColor="#a4be7c" />
            </linearGradient>
            <pattern id="ridge" width="4" height="2" patternUnits="userSpaceOnUse" patternTransform="rotate(-4)">
                <path d="M0 1h4" stroke="#0c3a24" strokeWidth=".9" />
            </pattern>
        </defs>

        {/* body */}
        <path d="M605 268l95 54v329l-95-54z" fill="#d5d64f" />
        <path d="M700 320h24v331h-24z" fill="#b0b162" />
        <path d="M724 323l36-21v329l-36 20z" fill="#81818b" />
        <path d="M605 270v327l95 54h24" strokeWidth="1.500" />

        {/* collar */}
        <path d="M599 255l74 39 26 17v12l-100-55z" fill="#d67457" />
        <path d="M673 290l67-30 13 4 14 7v17l-40 23h-28z" fill="#df7b50" />
        <path d="M699 311h28v12h-28z" fill="#b06368" />
        <path d="M727 311l40-23v13l-40 22z" fill="#744a83" />
        <path d="M681 284l20 18h23l37-20v5l-37 19h-24l-26-15z" fill="#cf6f52" />
        <path d="M681 262l50-15 22 17 8 7v11l-37 20h-23l-20-12z" fill="#ea854d" stroke="none" />
        <path d="M753 264l8 7v11l-37 20h-23l-20-12" />
        <path d="M761 282v6M724 302v4M701 302v4" />
        <path d="M599 255v13l100 55h28l40-22" strokeWidth="1.500" />

        {/* right arm and inner block */}
        <path d="M700 236l34-13v36l-34 8z" fill="#dd7a51" />
        <path d="M734 200h6v50l-6 4z" fill="#71688f" />
        <path d="M691 245l13-3v20l-13-4z" fill="#8d4f76" />
        <path d="M684 257l8-3 20 10-7 6zM705 243l18 9-4 5-15-8z" fill="#5c8c68" />
        <path d="M687 258l18 9M706 247l12 7" strokeWidth="1.500" />

        {/* top shell */}
        <path d="M599 170l40-22h29l65 36q7 4 7 16l-6 2q0-9-6-14l-16-10-60 33 19 11q8 5 8 16l-5-1-74-50z" fill="#b4cb6c" />
        <path d="M599 187l69 35q6 4 6 15v58l-75-40z" fill="url(#shell)" />
        <path d="M674 237l5-3 2 2v53l-7 6z" fill="#6a6389" />
        <path d="M599 187v-17l40-22h29l65 36M599 187v68" strokeWidth="1.500" />
        <path d="M652 211l56-34 8 3-58 35z" fill="#767d78" />

        {/* groove and hole */}
        <path d="M637 195l-23-11v-9l30-17h19l23 11" strokeWidth="5" />
        <path d="M637 195l-23-11v-9l30-17h19l23 11" stroke="#a9bd66" strokeWidth="2" />
        <path d="M613 185v-10l30-17" stroke="#3f4a38" strokeWidth="2" />
        <ellipse cx="653" cy="178" rx="14" ry="8" fill="#7b8e5b" strokeWidth="1.500" />
        <ellipse cx="653" cy="181" rx="12" ry="5" fill="#8b9496" />

        {/* wheel */}
        <path d="M706 179q16-6 28 12 8 14 5 28-4 7-15 12z" fill="url(#disc)" />
        <path d="M665 205l38-23q15-1 25 15 8 14 6 27l-40 23z" fill="url(#drum)" stroke="none" />
        <path d="M703 182q15-1 25 15 8 14 6 27M707 181q15 1 24 17 6 13 5 25" />
        <path d="M655 213q8-9 17-8 12 3 18 18 6 14 3 24l-9 9-2-1q0-18-6-27z" fill="url(#disc)" />
        <path d="M661 209q11 0 19 15 8 17 6 30M665 205l38-23M694 247l40-21" />

        {/* push pad */}
        <path d="M692 268v5l21 14 11 1 28-17v-8z" fill="#3b8a63" />
        <path d="M692 267l38-20 12 3 10 12v5l-28 16-11-1-20-10z" fill="#4cab78" />
        <path d="M692 267l38-20 12 3 10 12v5l-28 16-11-1-20-10z" fill="url(#ridge)" />
        <path d="M713 282v5M724 283v5" />

        {/* 3d cursor */}
        <path d="M801 286l75 12" stroke="#20208c" />
        <path d="M855 253l-6 62" stroke="#3d8a3d" />
        <path d="M854 280l-11 43" stroke="#9c2f2a" />
        <path d="M848 291h5v6h-5z" stroke="#4c7a5c" />

        {/* ucs icon */}
        <path d="M71 623v-22" stroke="#1d6ea5" strokeWidth="3" />
        <path d="M71 589l6 13q-6 3-11 0z" fill="#2b8ad0" stroke="none" />
        <path d="M72 622l18-10" stroke="#14b02a" strokeWidth="2" />
        <path d="M100 606l-8 10-5-7z" fill="#0c9a1c" stroke="#0c7a18" />
        <path d="M72 623l18 10" stroke="#c23a3a" strokeWidth="2" />
        <path d="M100 640l-13-2 5-8z" fill="#dc2c2c" stroke="#9c1c1c" />
        <circle cx="71" cy="623" r="1.500" fill="#333" stroke="none" />
        <g stroke="none" fontFamily="Liberation Sans, sans-serif" fontSize="13" textAnchor="middle">
            <text x="79" y="584" fill="#2f80c0">Z</text>
            <text x="105" y="599" fill="#3fd45c">Y</text>
            <text x="105" y="628" fill="#dd3a3a">X</text>
        </g>
    </svg>
);

const Palette = ({ title, items, closable, className }) => (
    <section className={clsx("absolute overflow-hidden bg-[#f0f0f0] p-[7px] shadow-[inset_0_0_0_4px_#e6e6e6]", className)}>
        <div className="flex h-[22px] items-center justify-between bg-[#99b4d1] pr-[2px] pl-[2px] text-[#14202c]">
            <h2 className="text-[14px] leading-[22px]">{title}</h2>
            {closable && (
                <button aria-label="Close" className="flex h-[18px] w-5 items-center justify-center border-r border-b border-[#696969] bg-[#f4f4f4]">
                    <svg viewBox="0 0 10 10" width="10" height="10" stroke="#000" strokeWidth="1.400"><path d="M1 1l8 8M9 1l-8 8" /></svg>
                </button>
            )}
        </div>
        <div className="mt-1 flex items-center"><Tools items={items} /></div>
    </section>
);

const TAB_CLIP = "[clip-path:polygon(0_0,100%_0,calc(100%-5px)_100%,5px_100%)]";

const App = () => {
    const [tab, setTab] = useState("Model");
    const [modes, setModes] = useState({ OSNAP: true, OTRACK: true, DUCS: true, DYN: true, MODEL: true });
    const toggleMode = (m) => setModes((prev) => ({ ...prev, [m]: !prev[m] }));

    return (
        <div className="flex h-screen flex-col overflow-hidden bg-[#f0f0f0] font-['Liberation_Sans',Arial,sans-serif] text-[11px] text-black">
            {/* title bar */}
            <header className="grid h-[23px] shrink-0 grid-cols-[1fr_auto_1fr] bg-[#a2cf5f]">
                <svg viewBox="0 0 16 16" width="16" height="16" className="mt-[3px] ml-[2px]">
                    <path d="M0 0h16v16H0z" fill="#2c7d80" />
                    <path d="M1 12L4 3l3 9M2 9h4M9 13V6h5v7M8 10h7M11 3v12" stroke="#e8f6f4" strokeWidth="1.300" fill="none" />
                </svg>
                <h1 className="font-['Open_Sans',sans-serif] text-[15px] leading-[23px] text-[#33471a]">AutoCAD 2007 - [G:\Korek.dwg]</h1>
                <div className="flex justify-end pr-[3px]">
                    <button aria-label="Minimize" className="flex h-[18px] w-[26px] items-center justify-center pt-1"><span className="h-[2px] w-2 bg-[#1c2a10]" /></button>
                    <button aria-label="Restore" className="flex h-[18px] w-7 items-center justify-center">
                        <svg viewBox="0 0 12 12" width="12" height="12" fill="none" stroke="#1c2a10" strokeWidth="1.500"><path d="M1 4h7v7H1zM3 2h8v7" /></svg>
                    </button>
                    <button aria-label="Close" className="flex h-[18px] w-[45px] items-center justify-center bg-[#c75050] text-white">
                        <Chevron d="M2 2l6 6M8 2l-6 6" />
                    </button>
                </div>
            </header>

            {/* menu bar */}
            <nav className="flex h-5 shrink-0 items-center bg-[#f5f6f7] pl-2">
                <svg viewBox="0 0 16 16" width="16" height="16" fill="none">
                    <path d="M1 15V7l6-2 8 4v6z" fill="#efc53c" stroke="#c99a1c" />
                    <path d="M4 8l4-6 6 3 1 5z" fill="#2c5f7c" />
                    <path d="M1 3h6M4 0v6" stroke="#284a66" />
                </svg>
                {menus.map((m) => (
                    <button key={m} className="px-[6px] font-['Open_Sans',sans-serif] text-[12px] leading-5 hover:bg-[#d5e6f5]">{m}</button>
                ))}
                <div className="ml-auto flex gap-[2px] pr-[2px] text-[#5c7388]">
                    {["M1 8h6", "M1 5h5v4H1zM4 4V1h5v5H7", "M2 2l6 6M8 2l-6 6"].map((d) => (
                        <button key={d} aria-label="window control" className="flex h-[17px] w-[17px] items-center justify-center border border-[#b4c5d6] bg-[#e4eef8]">
                            <svg viewBox="0 0 10 10" width="10" height="10" fill="none" stroke="currentColor" strokeWidth="1.500"><path d={d} /></svg>
                        </button>
                    ))}
                </div>
            </nav>

            {/* toolbars */}
            <div className="flex h-7 shrink-0">
                <Bar>
                    <Tools items={["new", "open", "save", "|", "print", "preview", "publish", "globe", "|", "cut", "copy", "paste", "match", "blockEdit", "|", "undo", "v", "redo", "v-", "|", "pan", "zoomRt", "zoomWin", "zoomPrev", "|", "props", "dcenter", "palettes", "sheets", "markup", "calc", "|", "help"]} />
                </Bar>
                <Bar>
                    <Tools items={["textStyle"]} /><Combo label="Text style" value="Standard" width="w-[100px]" />
                    <Sep /><Tools items={["dimStyle"]} /><Combo label="Dimension style" value="Standard" width="w-[100px]" />
                    <Sep /><Tools items={["tableStyle"]} /><Combo label="Table style" value="Standard" width="w-[100px]" />
                </Bar>
                <Bar><Tools items={["wire2d", "|", "wire3d", "hidden3d", "realistic", "conceptual", "|", "vsManager"]} /></Bar>
            </div>
            <div className="flex h-7 shrink-0">
                <Bar>
                    <Combo label="Workspace" value="AutoCAD Classic" width="w-[175px]" inset="pl-2" />
                    <Tools items={["gear", "workspace"]} />
                </Bar>
                <Bar>
                    <Tools items={["layers"]} />
                    <Combo
                        label="Layer"
                        value="0"
                        width="w-[300px]"
                        before={<><span className="ml-1 flex shrink-0"><Icon name="bulb" /><Icon name="sun" /><Icon name="vp" /><Icon name="lock" /></span><span className="size-[10px] shrink-0 border border-black" /></>}
                    />
                    <Tools items={["layerMake", "layerPrev"]} />
                </Bar>
                <Bar className="pl-px">
                    <Combo label="Color" value="ByLayer" width="w-[150px]" before={<Swatch />} inset="pl-1" />
                    <Sep /><Combo label="Linetype" value="ByLayer" width="w-[160px]" line />
                    <Sep /><Combo label="Lineweight" value="ByLayer" width="w-[124px]" line />
                    <Sep /><Combo label="Plot style" value="ByColor" width="w-[120px]" inset="pl-2" disabled />
                </Bar>
            </div>
            <div className="flex h-7 shrink-0 overflow-hidden">
                <Bar className="pr-[5px]">
                    <Tools items={["trackPt", "from", "|", "endpt", "midpt", "inter", "appInt", "ext", "|", "center", "quad", "tan", "|", "perp", "par", "insertPt", "node", "|", "nearest", "noneSnap", "|", "magnet"]} />
                </Bar>
                <Bar>
                    <Tools items={["namedViews", "|", "top", "bottom", "left", "right", "front", "back", "|", "sw", "se", "ne", "nw", "|", "camera", "|", "prevView"]} />
                    <Combo label="View" value="" width="w-[140px]" disabled />
                </Bar>
                <Bar>
                    <Tools items={["union", "subtract", "intersect", "|", "extrude", "moveFace", "offsetFace", "deleteFace", "rotateFace", "taper", "copyFace", "colorFace", "|", "copyEdge", "colorEdge", "|", "imprint", "clean", "separate", "shell", "check"]} />
                </Bar>
            </div>

            {/* workspace */}
            <main className="relative flex min-h-0 flex-1 overflow-hidden">
                <aside className="w-[26px] shrink-0">
                    <div className="flex w-[25px] flex-col items-center border-r border-b border-[#a5a5a5] pb-1">
                        <HGrip />
                        <Tools items={drawTools} />
                        <button aria-label="Multiline text" className="h-[22px] w-[23px] font-['Open_Sans',sans-serif] text-[18px] leading-[22px]">A</button>
                    </div>
                </aside>

                <div className="flex min-w-0 flex-1 flex-col">
                    <div className="relative min-h-0 flex-1 border-2 border-t-[#696969] border-r-black border-b-black border-l-[#696969] bg-[#c0c0c0]">
                        <Drawing />
                        <p className="pointer-events-none absolute inset-x-0 top-[38%] flex items-start justify-center whitespace-nowrap text-[#ececec] [text-shadow:1px_1px_1px_#555]">
                            <span className="font-['Noto_Sans_CJK_SC',sans-serif] text-[57px] leading-[90px] font-light">莫西网</span>
                            <span className="font-['Liberation_Mono','Noto_Sans_CJK_SC',monospace] text-[48px] leading-[106px]">www.3dmox.com</span>
                        </p>
                    </div>
                    <div className="flex h-[21px] shrink-0 items-start pl-px">
                        {["M2 1v8M9 1L4 5l5 4z", "M7 1L2 5l5 4z", "M3 1l5 4-5 4z", "M8 1v8M1 1l5 4-5 4z"].map((d) => (
                            <button key={d} aria-label="tab scroll" className="flex h-4 w-[18px] items-center justify-center border-r border-[#b5b5b5]">
                                <svg viewBox="0 0 10 10" width="10" height="9" fill="#000" stroke="#000"><path d={d} /></svg>
                            </button>
                        ))}
                        <div role="tablist" className="ml-[3px] flex">
                            {["Model", "Layout1", "Layout2"].map((t, i) => (
                                <button
                                    key={t}
                                    role="tab"
                                    aria-selected={tab === t}
                                    onClick={() => setTab(t)}
                                    className={clsx("relative h-4 bg-black px-px pb-px", TAB_CLIP, i > 0 && "-ml-1", tab === t ? "z-10 text-white" : "text-black")}
                                >
                                    <span className={clsx("block px-[7px] leading-[15px]", TAB_CLIP, tab === t ? "bg-black" : "bg-white")}>{t}</span>
                                </button>
                            ))}
                        </div>
                    </div>
                </div>

                <aside className="flex w-7 shrink-0 flex-col items-center pl-px">
                    <div className="flex w-full flex-col items-center border-b border-[#a5a5a5] pb-1">
                        <HGrip />
                        <Tools items={modifyTools} />
                    </div>
                    <div className="flex w-full flex-col items-center border-b border-[#a5a5a5] pt-[2px] pb-1">
                        <HGrip />
                        <Tools items={orderTools} />
                    </div>
                </aside>

                <Palette
                    title="UCS"
                    className="top-2 right-0 h-[66px] w-[220px] pr-0 font-['Open_Sans',sans-serif]"
                    items={["ucs", "|", "ucsWorld", "ucsPrev", "|", "ucsFace", "ucsObject", "ucsView", "|", "ucsOrigin", "ucsZ", "ucs"]}
                />
                <Palette title="Orbit" closable className="top-32 right-[29px] h-[66px] w-[86px] font-['Open_Sans',sans-serif]" items={["orbit", "freeOrbit", "contOrbit"]} />
            </main>

            {/* command window */}
            <section className="flex h-14 shrink-0 border-t-2 border-[#696969] pt-[9px] pr-2 pb-[2px] pl-[3px]">
                <Grip />
                <div className="ml-[2px] flex min-w-0 flex-1 flex-col border-t-2 border-l-2 border-[#696969] bg-white font-['Liberation_Mono',monospace] text-[13px]">
                    <div className="flex h-[23px] shrink-0 border-b border-[#a0a0a0]">
                        <p className="flex-1 truncate pl-px leading-[18px]">[All/Center/Dynamic/Extents/Previous/Scale/Window/Object] &lt;real time&gt;: a</p>
                        <div className="flex w-[17px] flex-col items-center justify-between bg-[#f0f0f0] py-px text-[#505050]">
                            <Chevron d="M2 7l3-3 3 3" /><Chevron d="M2 3l3 3 3-3" />
                        </div>
                    </div>
                    <div className="flex min-h-0 flex-1 items-center">
                        <label htmlFor="cmd" className="pt-1 leading-[16px]">Command:</label>
                        <input id="cmd" className="h-4 min-w-0 flex-1 pl-1 outline-none" />
                        <div className="flex h-full w-[85px] items-center justify-between self-stretch bg-[#f0f0f0] pr-5 pl-[5px] text-[#505050]">
                            <Chevron d="M7 1L3 5l4 4" />
                            <span className="mr-auto ml-1 h-4 w-[17px] bg-[#cdcdcd]" />
                            <Chevron d="M3 1l4 4-4 4" />
                        </div>
                    </div>
                </div>
            </section>

            {/* status bar */}
            <footer className="flex h-6 shrink-0 items-end border-t border-b-2 border-t-[#a0a0a0] border-b-[#9aa37c] pl-[5px]">
                <span className="h-[17px] w-[174px] border-t border-r border-l border-[#a0a0a0] leading-[16px]">-1129.1680, -873.7858, 0.0000</span>
                <div className="ml-px flex">
                    {["SNAP", "GRID", "ORTHO", "POLAR", "OSNAP", "OTRACK", "DUCS", "DYN", "LWT", "MODEL"].map((m) => (
                        <button
                            key={m}
                            aria-pressed={!!modes[m]}
                            onClick={() => toggleMode(m)}
                            className={clsx("h-[17px] leading-[16px]", modes[m] ? "ml-[3px] border-t border-l border-black px-px" : "border-r border-[#a0a0a0] pr-px pl-[5px]")}
                        >
                            {m}
                        </button>
                    ))}
                </div>
                <div className="ml-auto flex h-[17px] w-[64px] items-center justify-around border-t border-l border-[#a0a0a0]">
                    <Icon name="comm" /><Icon name="padlock" /><Icon name="standards" />
                </div>
                <span className="mx-[5px] mb-1 border-x-[4px] border-t-[4px] border-x-transparent border-t-black" />
                <button aria-label="Clean screen" className="mr-1 ml-1"><Icon name="cleanScreen" /></button>
            </footer>
        </div>
    );
};

export default App;
